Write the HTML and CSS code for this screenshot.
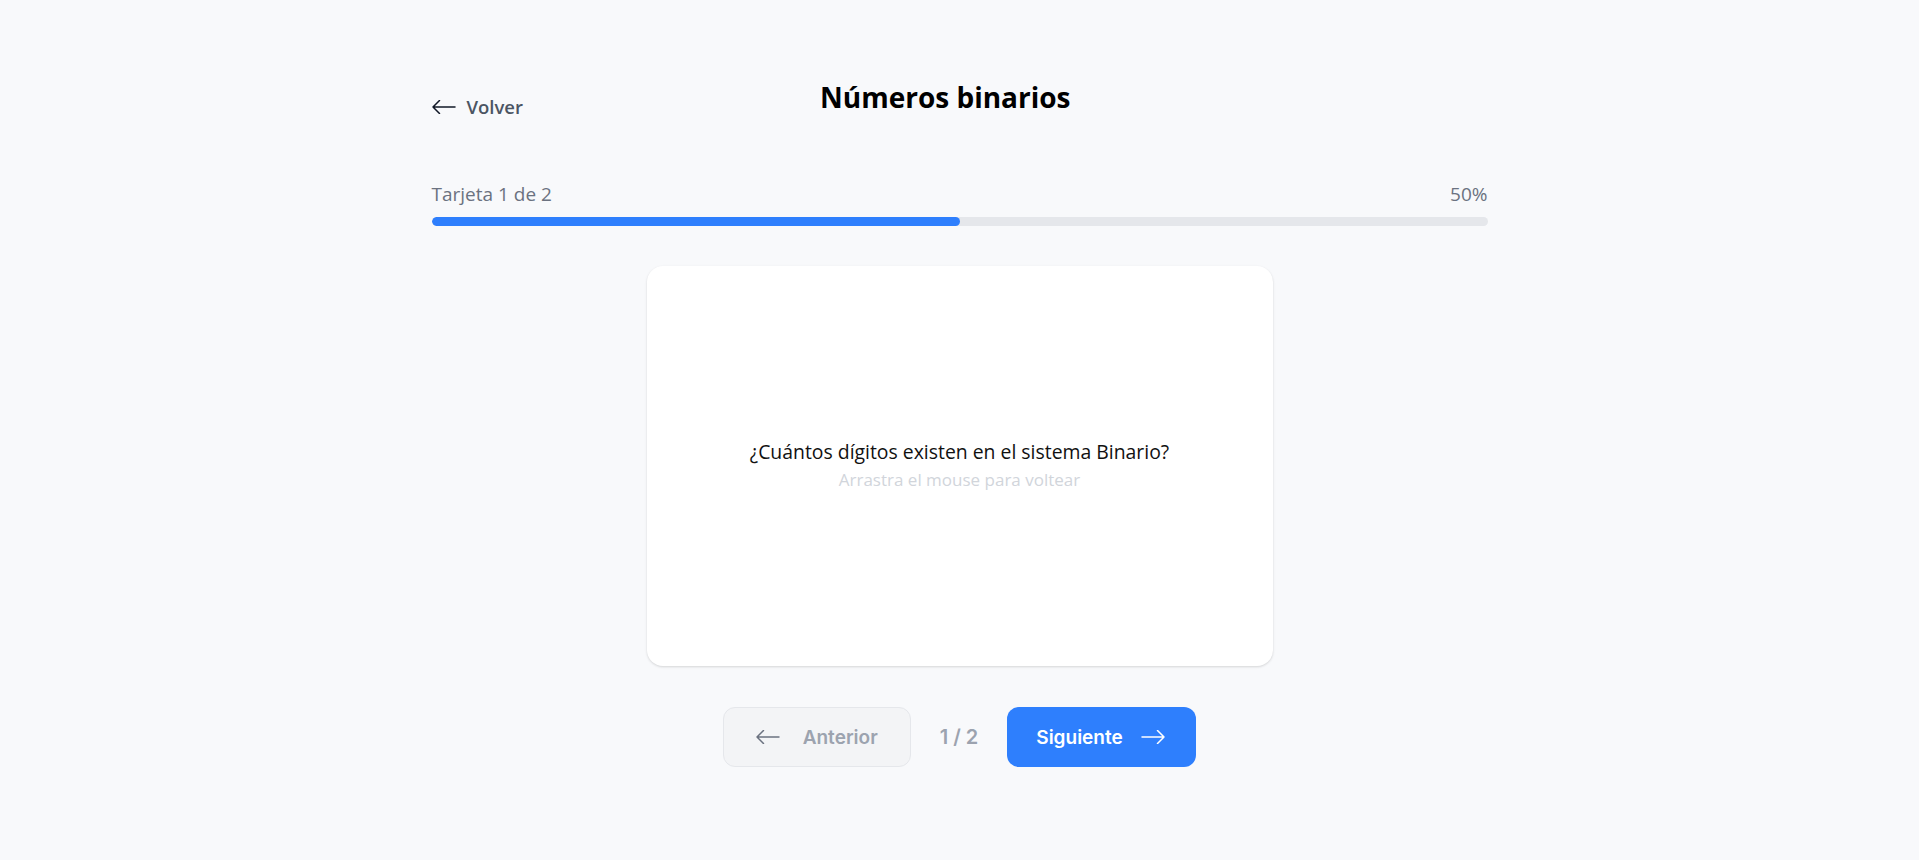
FILE: index.html
```html
<!DOCTYPE html>
<html lang="es">
<head>
<meta charset="utf-8">
<title>Números binarios</title>
<link rel="stylesheet" href="styles.css">
</head>
<body>
<main class="page">
  <header class="header">
    <button class="back">
      <svg class="arrow" viewBox="0 0 24 14" width="24" height="14"><path d="M23 7H1M7.5 0.5L1 7l6.5 6.5" fill="none" stroke="currentColor" stroke-width="1.5" stroke-linecap="round" stroke-linejoin="round"/></svg>
      <span>Volver</span>
    </button>
    <h1 class="title">Números binarios</h1>
    <div class="spacer"></div>
  </header>

  <section class="progress">
    <div class="progress-labels">
      <span>Tarjeta 1 de 2</span>
      <span>50%</span>
    </div>
    <div class="track"><div class="fill" style="width:50%"></div></div>
  </section>

  <div class="card">
    <p class="question">¿Cuántos dígitos existen en el sistema Binario?</p>
    <p class="hint">Arrastra el mouse para voltear</p>
  </div>

  <nav class="controls">
    <button class="btn btn-prev" disabled>
      <svg class="arrow" viewBox="0 0 24 14" width="24" height="14"><path d="M23 7H1M7.5 0.5L1 7l6.5 6.5" fill="none" stroke="currentColor" stroke-width="1.5" stroke-linecap="round" stroke-linejoin="round"/></svg>
      <span>Anterior</span>
    </button>
    <span class="counter">1 / 2</span>
    <button class="btn btn-next">
      <span>Siguiente</span>
      <svg class="arrow" viewBox="0 0 24 14" width="24" height="14"><path d="M1 7h22M16.5 0.5L23 7l-6.5 6.5" fill="none" stroke="currentColor" stroke-width="1.5" stroke-linecap="round" stroke-linejoin="round"/></svg>
    </button>
  </nav>
</main>
</body>
</html>
```

FILE: styles.css
```css
* { box-sizing: border-box; }
html, body { margin: 0; padding: 0; }
body {
  background: #f8f9fb;
  font-family: "Open Sans", "Noto Sans", sans-serif;
  color: #111827;
}
.page {
  width: 1056px;
  margin: 0 auto;
  padding-top: 74px;
}
.header {
  display: flex;
  justify-content: space-between;
  align-items: flex-start;
  height: 107px;
}
.back {
  display: flex;
  align-items: center;
  gap: 11px;
  background: none;
  border: 0;
  padding: 0;
  margin-top: 20px;
  font-family: inherit;
  font-size: 18.5px;
  font-weight: 600;
  color: #4b5563;
  cursor: pointer;
}
.back .arrow { color: #111827; width: 24px; height: 14px; }
.title {
  margin: 5px 0 0 0;
  font-size: 28px;
  line-height: 36px;
  font-weight: 700;
  color: #000;
}
.spacer { width: 120px; }
.progress-labels {
  display: flex;
  justify-content: space-between;
  font-size: 19px;
  line-height: 26px;
  font-weight: 500;
  color: #6b7280;
  margin-bottom: 10px;
}
.track {
  height: 9px;
  background: #e5e7eb;
  border-radius: 999px;
  overflow: hidden;
}
.fill {
  height: 100%;
  background: #2e7ffd;
  border-radius: 999px;
}
.card {
  width: 626px;
  height: 400px;
  margin: 40px auto 0;
  background: #fff;
  border-radius: 16px;
  box-shadow: 0 1px 3px rgba(0,0,0,0.10), 0 1px 2px rgba(0,0,0,0.05);
  display: flex;
  flex-direction: column;
  align-items: center;
  justify-content: center;
  text-align: center;
}
.question {
  margin: 0;
  font-size: 19.4px;
  line-height: 28px;
  font-weight: 500;
  color: #111;
}
.hint {
  margin: 0;
  font-size: 17px;
  line-height: 28px;
  font-weight: 400;
  color: #d1d5db;
}
.controls {
  display: flex;
  justify-content: center;
  align-items: center;
  gap: 29px;
  margin-top: 41px;
}
.btn {
  display: flex;
  align-items: center;
  height: 60px;
  border-radius: 12px;
  font-family: "Inter", sans-serif;
  font-size: 19px;
  font-weight: 600;
  cursor: pointer;
}
.btn-prev {
  width: 188px;
  padding: 0 32px;
  gap: 23px;
  background: #f3f4f6;
  border: 1px solid #e5e7eb;
  color: #9ca3af;
}
.btn-prev .arrow { color: #6b7280; }
.btn-next {
  width: 189px;
  padding: 0 29px;
  gap: 18px;
  background: #2e7ffd;
  border: 0;
  color: #fff;
}
.counter {
  font-family: "Inter", sans-serif;
  font-size: 20px;
  font-weight: 600;
  color: #9ca3af;
}
```
